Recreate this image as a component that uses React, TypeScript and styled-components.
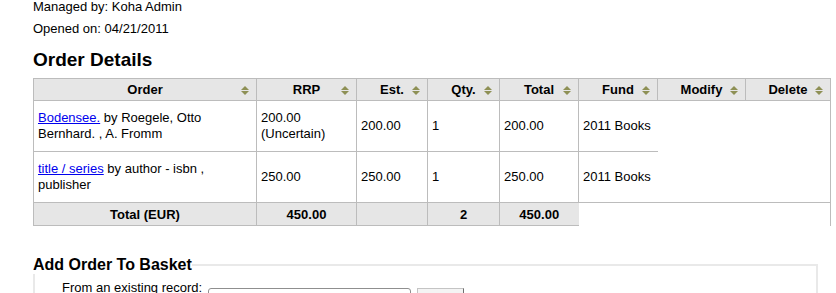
import * as React from 'react';
import styled, { createGlobalStyle } from 'styled-components';

const GlobalStyle = createGlobalStyle`
    html, body {
        margin: 0;
        padding: 0;
        background: #fff;
    }
    body {
        font-family: "Liberation Sans", Arial, sans-serif;
        font-size: 13px;
        color: #000;
    }
`;

const Page = styled.div`
    padding: 0 6px 0 33px;
    height: 293px;
    overflow: hidden;
`;

const InfoLine = styled.div`
    line-height: 13px;
    margin-bottom: 9px;
`;

const Heading = styled.h1`
    font-size: 19px;
    line-height: 22px;
    font-weight: bold;
    margin: 14px 0 7px;
`;

const Table = styled.table`
    border-collapse: collapse;
    table-layout: fixed;
    width: 797px;
`;

const Col = styled.col<{ $w: number }>`
    width: ${(p) => p.$w}px;
`;

const HeadCell = styled.th`
    position: relative;
    height: 21px;
    padding: 0;
    border: 1px solid #bcbcbc;
    background: #e6e6e6;
    font-weight: bold;
    text-align: center;
    white-space: nowrap;
`;

const SortIcon = styled.svg`
    position: absolute;
    right: 7px;
    top: 7px;
`;

const Cell = styled.td<{ $noRight?: boolean }>`
    height: 50px;
    padding: 0 4px;
    border: 1px solid #bcbcbc;
    ${(p) => (p.$noRight ? 'border-right: none;' : '')}
    line-height: 16px;
    vertical-align: middle;
`;

const Filler = styled.td<{ $bottom?: boolean }>`
    padding: 0;
    border: none;
    border-right: 1px solid #bcbcbc;
    ${(p) => (p.$bottom ? 'border-bottom: 1px solid #bcbcbc;' : '')}
`;

const TotalCell = styled.td<{ $last?: boolean }>`
    height: 22px;
    padding: 0 4px;
    border: 1px solid #bcbcbc;
    ${(p) => (p.$last ? 'border-right: none;' : '')}
    background: #e6e6e6;
    font-weight: bold;
    text-align: center;
`;

const TitleLink = styled.a`
    color: #0000ee;
    text-decoration: underline;
`;

const Fieldset = styled.fieldset`
    width: 781px;
    margin: 30px 0 0;
    padding: 6px 0 0;
    border: 2px solid #e9e9e9;
    border-bottom: none;
`;

const Legend = styled.legend`
    margin-left: -2px;
    padding: 0;
    font-size: 16px;
    line-height: 18px;
    font-weight: bold;
`;

const FormRow = styled.div`
    display: flex;
    align-items: flex-start;
    padding-left: 27px;
`;

const Label = styled.label`
    width: 146px;
    line-height: 15px;
`;

const TextInput = styled.input`
    width: 197px;
    height: 20px;
    margin: 8px 0 0;
    padding: 0 2px;
    border: 1px solid #8f8f8f;
    border-radius: 3px;
    font: inherit;
`;

const Button = styled.button`
    width: 47px;
    height: 22px;
    margin: 8px 0 0 6px;
    border: 1px solid #c4c4c4;
    border-right-color: #6f6f6f;
    background: #f4f4f4;
    font: inherit;
`;

const Sort = () => (
    <SortIcon width="8" height="9" viewBox="0 0 8 9">
        <path d="M4 0 L8 4 L0 4 Z" fill="#8e9055" />
        <path d="M0 5 L8 5 L4 9 Z" fill="#8e9055" />
    </SortIcon>
);

const columns = ['Order', 'RRP', 'Est.', 'Qty.', 'Total', 'Fund', 'Modify', 'Delete'];
const widths = [223, 100, 71, 72, 79, 79, 88, 85];

interface OrderLine {
    title: string;
    rest: string;
    rrp: React.ReactNode;
    est: string;
    qty: number;
    total: string;
    fund: string;
}

const orders: OrderLine[] = [
    {
        title: 'Bodensee.',
        rest: ' by Roegele, Otto Bernhard. , A. Fromm',
        rrp: (
            <>
                200.00
                <br />
                (Uncertain)
            </>
        ),
        est: '200.00',
        qty: 1,
        total: '200.00',
        fund: '2011 Books',
    },
    {
        title: 'title / series',
        rest: ' by author - isbn , publisher',
        rrp: '250.00',
        est: '250.00',
        qty: 1,
        total: '250.00',
        fund: '2011 Books',
    },
];

const App: React.FC = () => (
    <Page>
        <GlobalStyle />
        <InfoLine>Managed by: Koha Admin</InfoLine>
        <InfoLine>Opened on: 04/21/2011</InfoLine>
        <Heading>Order Details</Heading>
        <Table>
            <colgroup>
                {widths.map((w, i) => (
                    <Col key={i} $w={w} />
                ))}
            </colgroup>
            <thead>
                <tr>
                    {columns.map((c) => (
                        <HeadCell key={c}>
                            {c}
                            <Sort />
                        </HeadCell>
                    ))}
                </tr>
            </thead>
            <tbody>
                {orders.map((o, i) => (
                    <tr key={i}>
                        <Cell>
                            <TitleLink href="#">{o.title}</TitleLink>
                            {o.rest}
                        </Cell>
                        <Cell>{o.rrp}</Cell>
                        <Cell>{o.est}</Cell>
                        <Cell>{o.qty}</Cell>
                        <Cell>{o.total}</Cell>
                        <Cell $noRight>{o.fund}</Cell>
                        <Filler colSpan={2} $bottom={i === orders.length - 1} />
                    </tr>
                ))}
            </tbody>
            <tfoot>
                <tr>
                    <TotalCell>Total (EUR)</TotalCell>
                    <TotalCell>450.00</TotalCell>
                    <TotalCell />
                    <TotalCell>2</TotalCell>
                    <TotalCell $last>450.00</TotalCell>
                    <Filler colSpan={3} />
                </tr>
            </tfoot>
        </Table>
        <Fieldset>
            <Legend>Add Order To Basket</Legend>
            <FormRow>
                <Label htmlFor="q">From an existing record:</Label>
                <TextInput id="q" type="text" />
                <Button type="submit">Submit</Button>
            </FormRow>
        </Fieldset>
    </Page>
);

export default App;
